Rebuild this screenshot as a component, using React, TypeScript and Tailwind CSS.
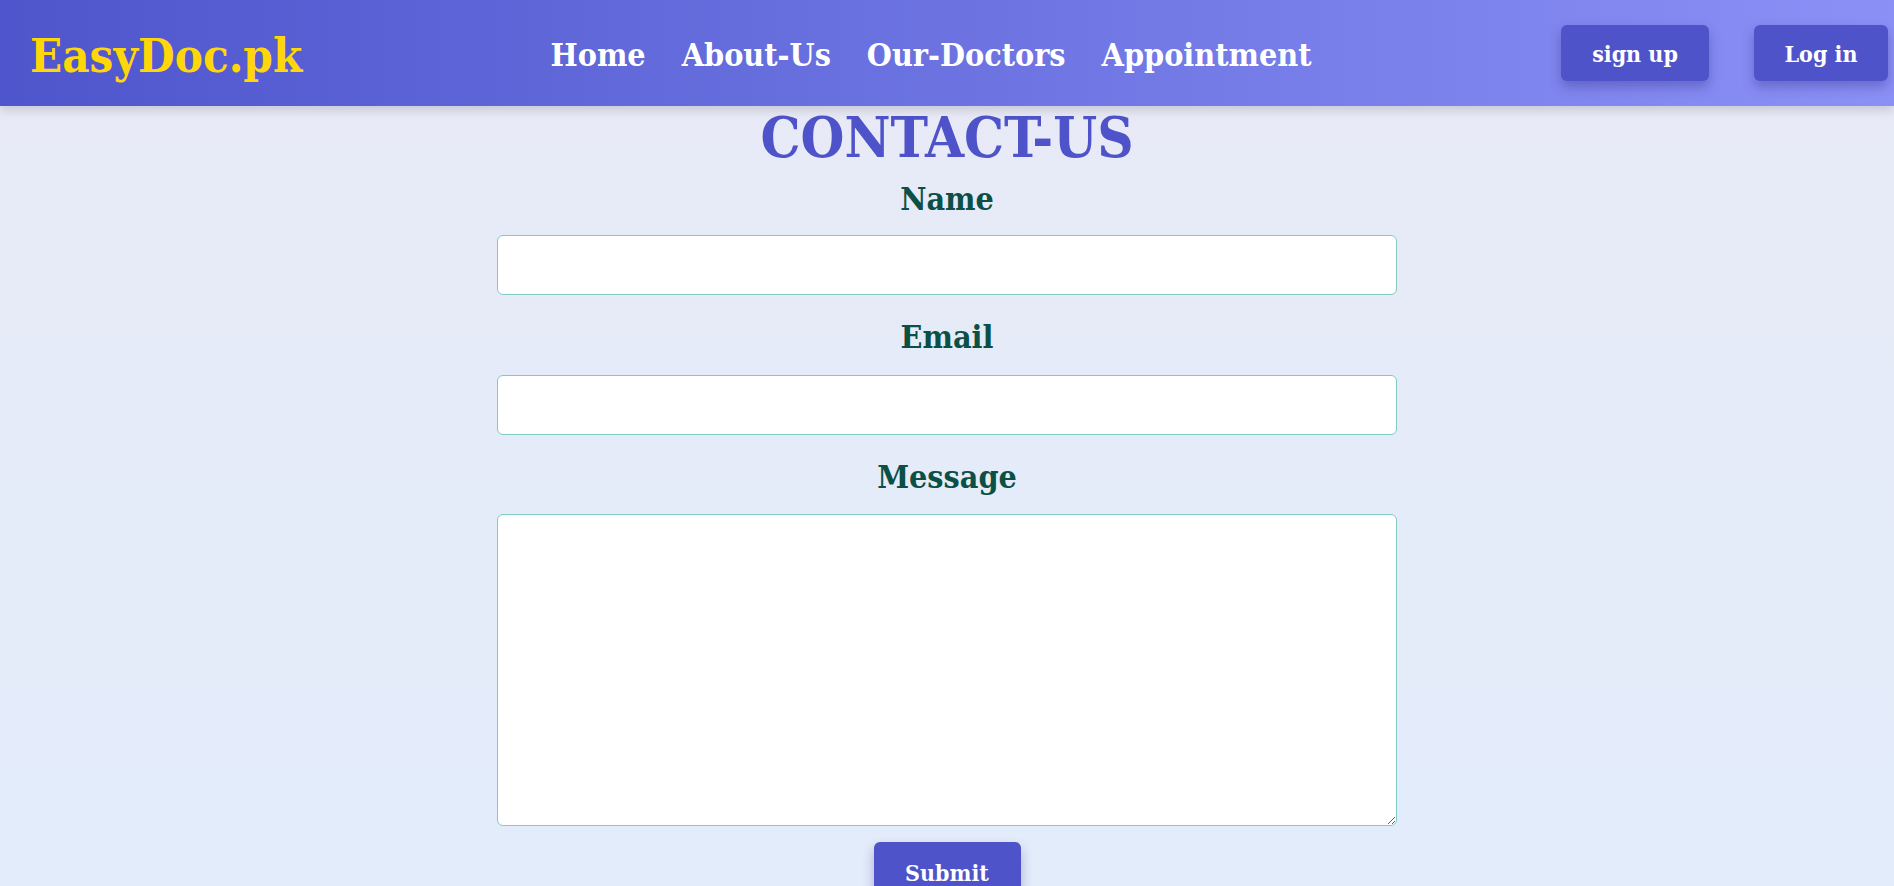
import React from "react";

const font = { fontFamily: '"DejaVu Serif Condensed", "DejaVu Serif", serif' };

export default function App() {
  return (
    <div
      className="min-h-[886px] w-full bg-gradient-to-b from-[#e8eaf6] to-[#e2ecfb]"
      style={font}
    >
      <header className="relative z-10 flex h-[106px] items-center justify-between bg-gradient-to-r from-[#4f55cc] to-[#8b90f6] pl-[30px] pr-[6px] shadow-[0_4px_10px_rgba(0,0,0,0.15)]">
        <div className="w-[424px] pt-[4px] text-[47px] font-bold leading-none text-[#ffd60a]">EasyDoc.pk</div>
        <nav className="flex items-center gap-[36px] pt-[4px] text-[32px] font-bold leading-none text-white">
          <a>Home</a>
          <a>About-Us</a>
          <a>Our-Doctors</a>
          <a>Appointment</a>
        </nav>
        <div className="flex w-[480px] items-center justify-end gap-[45px]">
          <button className="h-[56px] w-[148px] rounded-[6px] bg-[#4f53c9] pt-[3px] text-[23px] font-bold text-white shadow-[0_6px_12px_rgba(40,40,120,0.35)]">
            sign up
          </button>
          <button className="h-[56px] w-[134px] rounded-[6px] bg-[#4f53c9] pt-[3px] text-[23px] font-bold text-white shadow-[0_6px_12px_rgba(40,40,120,0.35)]">
            Log in
          </button>
        </div>
      </header>
      <main className="flex flex-col items-center">
        <h1 className="mt-0 text-[56px] font-bold leading-[62px] text-[#4f53c9]">CONTACT-US</h1>
        <label className="mt-[9px] text-[32px] font-bold leading-[44px] text-[#0b4f45]">Name</label>
        <input className="mt-[14px] h-[60px] w-[900px] rounded-[6px] border border-[#80cbc4] bg-white" />
        <label className="mt-[20px] text-[32px] font-bold leading-[44px] text-[#0b4f45]">Email</label>
        <input className="mt-[16px] h-[60px] w-[900px] rounded-[6px] border border-[#80cbc4] bg-white" />
        <label className="mt-[20px] text-[32px] font-bold leading-[44px] text-[#0b4f45]">Message</label>
        <textarea className="mt-[15px] h-[312px] w-[900px] rounded-[6px] border border-[#80cbc4] bg-white" />
        <button className="mt-[16px] h-[60px] w-[147px] rounded-[6px] bg-[#4f53c9] pt-[3px] text-[23px] font-bold text-white shadow-[0_6px_12px_rgba(40,40,120,0.3)]">
          Submit
        </button>
      </main>
    </div>
  );
}
